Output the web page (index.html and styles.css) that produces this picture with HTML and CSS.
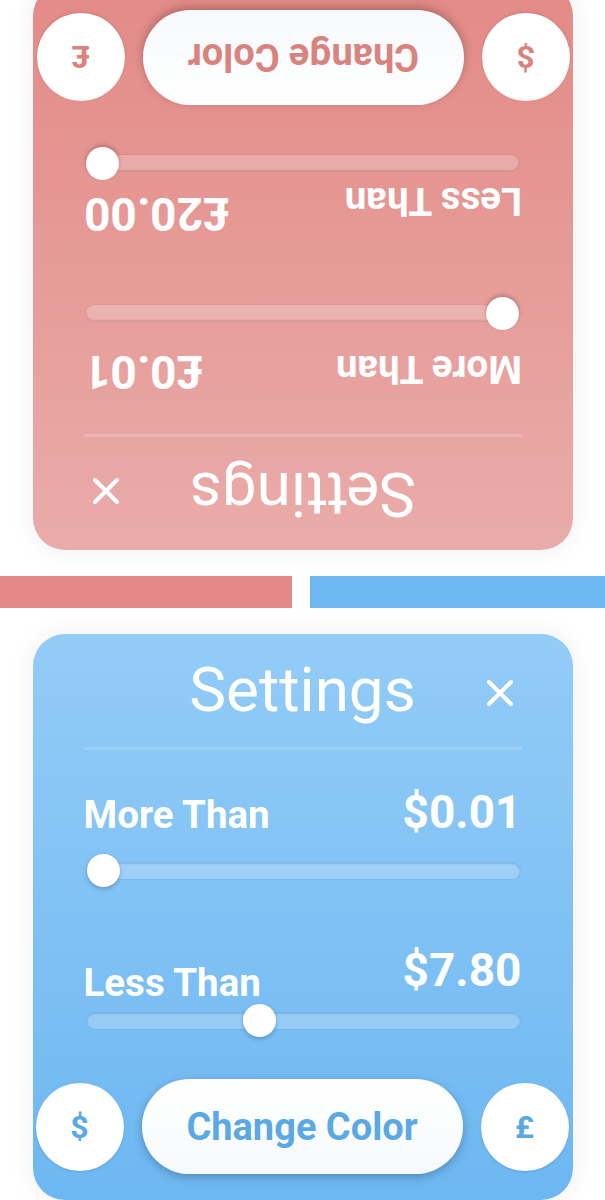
FILE: index.html
```html
<!DOCTYPE html>
<html lang="en">
<head>
  <meta charset="UTF-8">
  <meta name="viewport" content="width=device-width, initial-scale=1.0">
  <title>Settings</title>
  <link rel="stylesheet" href="styles.css">
</head>
<body>
  <div class="board">

    <!-- Spieler oben: gedreht -->
    <section class="panel panel-red flipped">
      <div class="panel-head">
        <h1>Settings</h1>
        <button class="close-btn" aria-label="close">
          <svg viewBox="0 0 28 28" width="28" height="28"><path d="M3 3 L25 25 M25 3 L3 25" stroke="#fff" stroke-width="4" stroke-linecap="round"/></svg>
        </button>
      </div>
      <div class="divider"></div>

      <div class="row">
        <span class="label">More Than</span>
        <span class="value">£0.01</span>
      </div>
      <div class="slider">
        <div class="track"></div>
        <div class="thumb" style="left: calc((100% - 33px) * 0)"></div>
      </div>

      <div class="row row-raised">
        <span class="label">Less Than</span>
        <span class="value">£20.00</span>
      </div>
      <div class="slider slider-last">
        <div class="track"></div>
        <div class="thumb" style="left: calc((100% - 33px) * 1)"></div>
      </div>

      <div class="actions">
        <button class="round-btn">$</button>
        <button class="pill-btn">Change Color</button>
        <button class="round-btn">£</button>
      </div>
    </section>

    <div class="midline">
      <div class="bar bar-red"></div>
      <div class="bar bar-blue"></div>
    </div>

    <!-- Spieler unten -->
    <section class="panel panel-blue">
      <div class="panel-head">
        <h1>Settings</h1>
        <button class="close-btn" aria-label="close">
          <svg viewBox="0 0 28 28" width="28" height="28"><path d="M3 3 L25 25 M25 3 L3 25" stroke="#fff" stroke-width="4" stroke-linecap="round"/></svg>
        </button>
      </div>
      <div class="divider"></div>

      <div class="row">
        <span class="label">More Than</span>
        <span class="value">$0.01</span>
      </div>
      <div class="slider">
        <div class="track"></div>
        <div class="thumb" style="left: calc((100% - 33px) * 0)"></div>
      </div>

      <div class="row row-raised">
        <span class="label">Less Than</span>
        <span class="value">$7.80</span>
      </div>
      <div class="slider slider-last">
        <div class="track"></div>
        <div class="thumb" style="left: calc((100% - 33px) * 0.39)"></div>
      </div>

      <div class="actions">
        <button class="round-btn">$</button>
        <button class="pill-btn">Change Color</button>
        <button class="round-btn">£</button>
      </div>
    </section>

  </div>
</body>
</html>
```

FILE: styles.css
```css
html, body {
  height: 100%;
  margin: 0;
  padding: 0;
  overflow: hidden;
  background: #fff;
  font-family: 'Roboto', 'Noto Sans', sans-serif;
}

.board {
  display: flex;
  flex-direction: column;
  align-items: center;
  gap: 26px;
  height: 1200px;
}

.panel {
  position: relative;
  width: 540px;
  height: 566px;
  flex-shrink: 0;
  box-sizing: border-box;
  padding: 0 51px;
  border-radius: 32px;
  display: flex;
  flex-direction: column;
  color: white;
  box-shadow: 0 0 28px rgba(0, 0, 0, 0.07);
}

.panel-blue {
  background: linear-gradient(#93ccf7, #6db7f2);
  --accent: #5aa8e4;
}

.panel-red {
  background: linear-gradient(#e9acaa, #e38a86);
  --accent: #d9837f;
}

.flipped {
  margin-top: -16px;
  transform: rotate(180deg);
}

.panel-head {
  position: relative;
  height: 112px;
  display: flex;
  justify-content: center;
  align-items: center;
}

.panel-head h1 {
  margin: 0;
  font-size: 62px;
  font-weight: 400;
  line-height: 1;
}

.close-btn {
  position: absolute;
  right: 8px;
  top: 45px;
  padding: 0;
  border: none;
  background: none;
  width: 28px;
  height: 28px;
}

.close-btn svg {
  display: block;
}

.divider {
  height: 3px;
  margin-top: 1px;
  background: rgba(255, 255, 255, 0.16);
}

.row {
  display: flex;
  justify-content: space-between;
  align-items: baseline;
  margin-top: 39px;
}

.label {
  font-size: 38.5px;
  font-weight: 700;
  line-height: 1;
}

.value {
  font-size: 46px;
  font-weight: 700;
  line-height: 1;
}

.row-raised {
  align-items: flex-end;
  margin-top: 59px;
}

.row-raised .value {
  margin-bottom: 9px;
}

.slider {
  position: relative;
  height: 34px;
  margin: 19px 2px 0 3px;
  display: flex;
  align-items: center;
}

.slider-last {
  margin-top: 2px;
}

.track {
  flex: 1;
  height: 16px;
  border-radius: 8px;
  background: rgba(255, 255, 255, 0.22);
  box-shadow: inset 0 1px 2px rgba(0, 0, 0, 0.14), 0 0 0 1px rgba(0, 0, 0, 0.04);
}

.thumb {
  position: absolute;
  top: 0;
  width: 33px;
  height: 33px;
  border-radius: 50%;
  background: #fff;
  box-shadow: 0 2px 4px rgba(0, 0, 0, 0.22);
}

.actions {
  display: flex;
  justify-content: space-between;
  align-items: center;
  margin: 41px -47px 0 -48px;
}

.actions button {
  border: none;
  background: #fff;
  color: var(--accent);
  font-family: 'Roboto', 'Noto Sans', sans-serif;
  font-weight: 700;
  padding: 0;
}

.round-btn {
  width: 88px;
  height: 88px;
  border-radius: 50%;
  font-size: 32px;
  box-shadow: 0 1px 3px rgba(0, 0, 0, 0.1);
}

.pill-btn {
  width: 321px;
  height: 95px;
  border-radius: 48px;
  font-size: 38px;
  background: linear-gradient(#fff, #f6f9fb) !important;
  box-shadow: 0 3px 10px rgba(0, 0, 0, 0.25);
}

.midline {
  display: grid;
  grid-template-columns: 292px 1fr;
  gap: 18px;
  width: 100%;
  flex-shrink: 0;
}

.bar {
  height: 32px;
}

.bar-red {
  background: #e38a86;
}

.bar-blue {
  background: #6db8f2;
}
```
